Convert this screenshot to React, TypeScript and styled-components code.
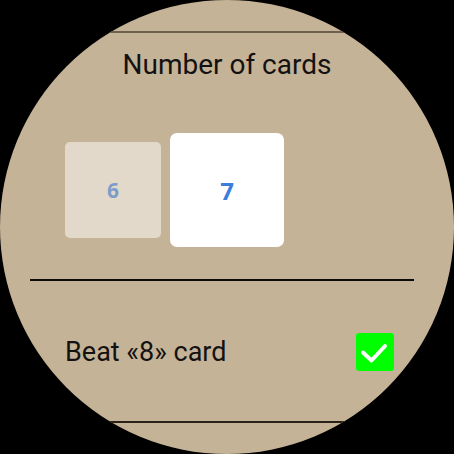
import styled, { createGlobalStyle } from "styled-components";

const Global = createGlobalStyle`
  html, body {
    margin: 0;
    padding: 0;
    background: #000;
  }
  body {
    font-family: Roboto, "Liberation Sans", sans-serif;
  }
`;

const Screen = styled.div`
  width: 454px;
  height: 454px;
  border-radius: 50%;
  overflow: hidden;
  background: #c5b397;
  display: flex;
  flex-direction: column;
`;

const Rule = styled.div<{ $left?: number; $right?: number; $color: string; $top: number }>`
  height: 2px;
  margin: ${(p) => p.$top}px ${(p) => p.$right ?? 0}px 0 ${(p) => p.$left ?? 0}px;
  background: ${(p) => p.$color};
  flex-shrink: 0;
`;

const Title = styled.div`
  margin-top: 15px;
  text-align: center;
  font-size: 28px;
  line-height: 33px;
  color: #141210;
`;

const CardRow = styled.div`
  margin-top: 52px;
  padding-left: 65px;
  display: flex;
  align-items: center;
  gap: 9px;
`;

const Card = styled.div<{ $active?: boolean }>`
  width: ${(p) => (p.$active ? 114 : 96)}px;
  height: ${(p) => (p.$active ? 114 : 96)}px;
  border-radius: ${(p) => (p.$active ? 7 : 5)}px;
  background: ${(p) => (p.$active ? "#ffffff" : "#e3d9ca")};
  color: ${(p) => (p.$active ? "#3a7ddc" : "#7c9dcb")};
  font-family: "Open Sans", "Noto Sans", sans-serif;
  font-weight: 700;
  font-size: ${(p) => (p.$active ? 24 : 21)}px;
  display: flex;
  align-items: center;
  justify-content: center;
`;

const OptionRow = styled.div`
  margin-top: 51px;
  padding: 0 60px 0 65px;
  display: flex;
  align-items: center;
  justify-content: space-between;
  height: 40px;
`;

const Label = styled.span`
  font-size: 27px;
  color: #141210;
  line-height: 32px;
`;

const Check = styled.div`
  width: 38px;
  height: 38px;
  border-radius: 3px;
  background: #00ff00;
  display: flex;
  svg {
    width: 38px;
    height: 38px;
  }
`;

export default function App() {
  return (
    <>
      <Global />
      <Screen>
        <Rule $top={31} $color="#6e604f" />
        <Title>Number of cards</Title>
        <CardRow>
          <Card>6</Card>
          <Card $active>7</Card>
        </CardRow>
        <Rule $top={32} $left={30} $right={40} $color="#0c0a08" />
        <OptionRow>
          <Label>Beat «8» card</Label>
          <Check>
            <svg viewBox="0 0 38 38">
              <polyline
                points="7,19.5 15.5,27.5 29,13"
                fill="none"
                stroke="#fff"
                strokeWidth="4"
                strokeLinecap="round"
                strokeLinejoin="round"
              />
            </svg>
          </Check>
        </OptionRow>
        <Rule $top={49} $color="#2a2219" />
      </Screen>
    </>
  );
}
